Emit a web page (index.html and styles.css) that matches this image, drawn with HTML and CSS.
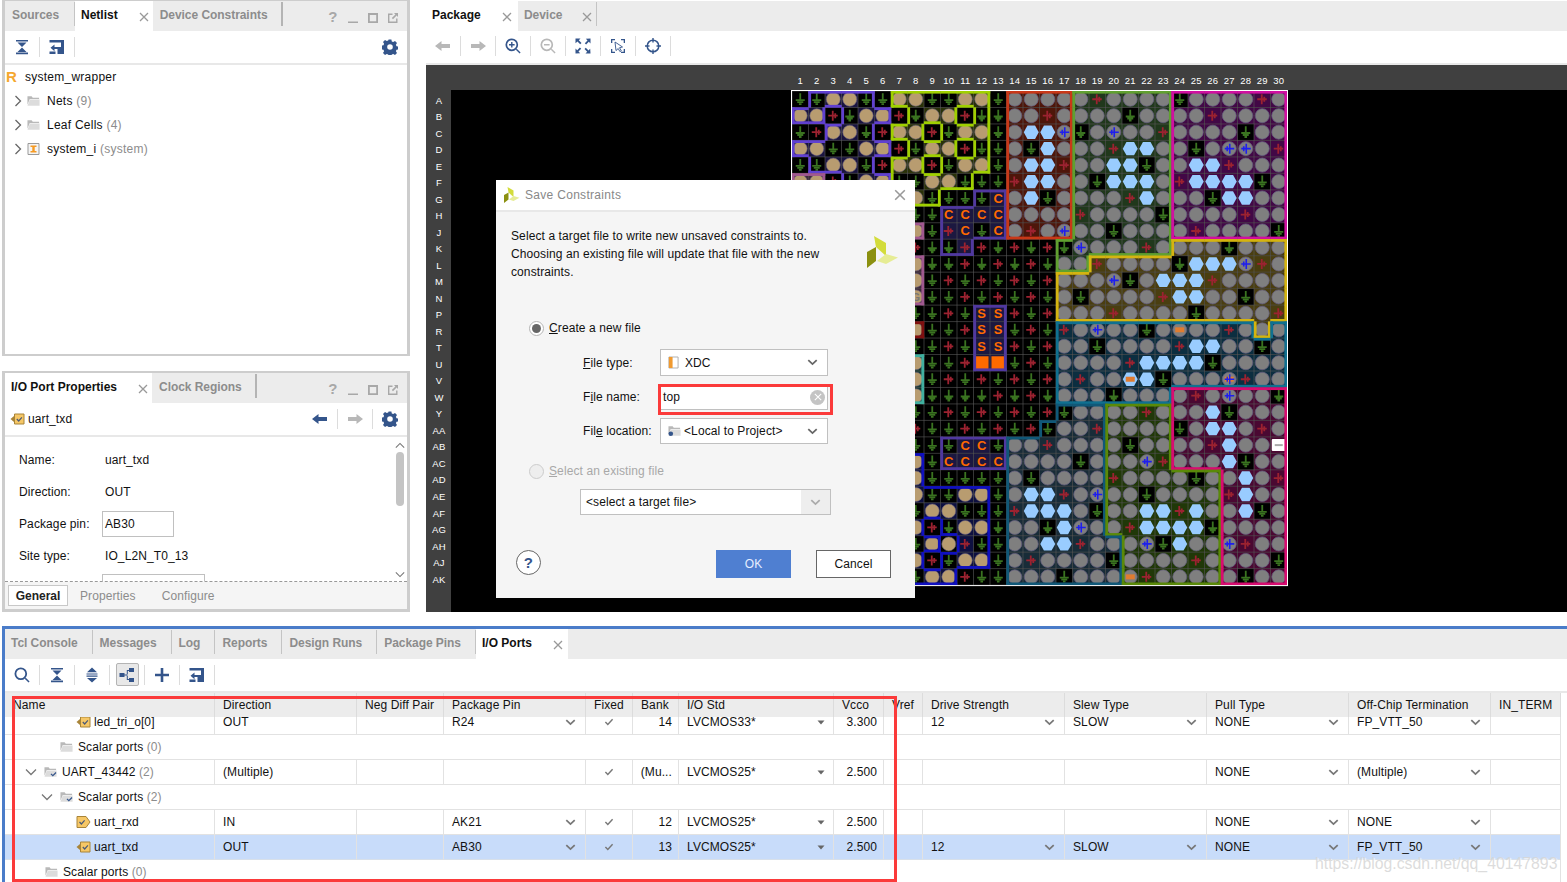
FILE: index.html
```html
<!DOCTYPE html>
<html lang="en">
<head>
<meta charset="utf-8">
<title>Save Constraints</title>
<link rel="stylesheet" href="styles.css">
</head>
<body>
<svg class="defs" aria-hidden="true">
  <symbol id="i-collapse" viewBox="0 0 14 16"><path d="M1 1h12v1.600H1zM2.500 3.600h9L7 8zM7 8.600l4.500 4.400h-9zM1 13.600h12v1.600H1z"/></symbol>
  <symbol id="i-expand" viewBox="0 0 14 16"><path d="M7 0.500l5 4.700H2zM1.500 6.400h11v1.200h-11zM1.500 8.600h11v1.200h-11zM2 11h10l-5 4.600z"/></symbol>
  <symbol id="i-net" viewBox="0 0 16 16"><path d="M0.500 1h14.500v14H8.500v-5H5.500v2.200L1.500 8.800 5.500 5.600v2.400h6.500V3.400H0.500zM0.500 12.600h6v2.400h-6z"/></symbol>
  <symbol id="i-gear" viewBox="0 0 16 16"><path fill-rule="evenodd" d="M6.600 0.500h2.800l.4 2 1.400.6 1.800-1.100 2 2-1.100 1.800.6 1.400 2 .4v2.800l-2 .4-.6 1.400 1.100 1.800-2 2-1.800-1.100-1.400.6-.4 2H6.600l-.4-2-1.400-.6-1.800 1.100-2-2 1.100-1.800-.6-1.400-2-.4V6.600l2-.4.6-1.400L1 3l2-2 1.800 1.100 1.400-.6zM8 5.200a2.800 2.800 0 1 0 0 5.600 2.800 2.800 0 0 0 0-5.600z"/></symbol>
  <symbol id="i-left" viewBox="0 0 16 12"><path d="M0 6l6.500-5v3H15v4H6.500v3z"/></symbol>
  <symbol id="i-right" viewBox="0 0 16 12"><path d="M16 6L9.500 1v3H1v4h8.500v3z"/></symbol>
  <symbol id="i-zin" viewBox="0 0 16 16"><circle cx="6.800" cy="6.800" r="5.500" fill="none" stroke="currentColor" stroke-width="1.700"/><path d="M10.800 11.800l1-1 3.800 3.800-1 1zM4 6.100h2.100V4h1.400v2.100h2.100v1.400H7.500v2.100H6.100V7.500H4z"/></symbol>
  <symbol id="i-zout" viewBox="0 0 16 16"><circle cx="6.800" cy="6.800" r="5.500" fill="none" stroke="currentColor" stroke-width="1.700"/><path d="M10.800 11.800l1-1 3.800 3.800-1 1zM4 6.100h5.600v1.400H4z"/></symbol>
  <symbol id="i-fit" viewBox="0 0 16 16"><path d="M0.500 0.500h5l-1.700 1.700 2.700 2.700-1.300 1.300-2.700-2.700L0.500 5.200zM15.500 0.500v5l-1.700-1.700-2.700 2.700-1.300-1.300 2.700-2.700-1.700-1.700zM0.500 15.500v-5l1.700 1.700 2.700-2.700 1.300 1.300-2.700 2.700 1.700 1.700zM15.500 15.500h-5l1.700-1.700-2.700-2.700 1.300-1.300 2.700 2.700 1.700-1.700z"/></symbol>
  <symbol id="i-sel" viewBox="0 0 16 16"><path d="M1 1h4v1.300H2.300V5H1zM11 1h4v4h-1.300V2.300H11zM1 11h1.300v2.700H5V15H1zM15 11v4h-4v-1.300h2.700V11z"/><path d="M5 4l7.500 5-3 .7 1.800 3.100-1.400.8-1.700-3.100-2.200 2.100z" fill="none" stroke="currentColor" stroke-width=".9"/></symbol>
  <symbol id="i-target" viewBox="0 0 16 16"><circle cx="8" cy="8" r="5.800" fill="none" stroke="currentColor" stroke-width="1.500"/><path d="M7.300 0h1.400v4.500H7.300zM7.300 11.500h1.400V16H7.300zM0 7.300h4.500v1.400H0zM11.500 7.300H16v1.400h-4.500z"/></symbol>
  <symbol id="i-search" viewBox="0 0 16 16"><circle cx="6.800" cy="6.800" r="5.400" fill="none" stroke="currentColor" stroke-width="1.800"/><path d="M10.700 11.800l1.100-1.100 3.800 3.800-1.100 1.100z"/></symbol>
  <symbol id="i-tree" viewBox="0 0 16 16"><path d="M0.500 6h5v4h-5zM10 1h5v4h-5zM10 11h5v4h-5zM5.500 7.400h2.300V3h2.200v1H8.800v3.400H8v1.200h.8V12H10v1H7.800V8.600H5.500z"/></symbol>
  <symbol id="i-plus" viewBox="0 0 16 16"><path d="M6.700 1h2.600v5.700H15v2.600H9.300V15H6.700V9.300H1V6.700h5.700z"/></symbol>
  <symbol id="i-folder" viewBox="0 0 14 12"><path d="M0.500 1h4.500l1.200 1.500H13v1.300H3L.5 10z" fill="#b9b9b9"/><path d="M0.500 11l2.600-6.500H13.500V11z" fill="#dcdcdc"/></symbol>
  <symbol id="i-folder-chk" viewBox="0 0 14 12"><path d="M0.500 1h4.500l1.200 1.500H13v1.300H3L.5 10z" fill="#b9b9b9"/><path d="M0.500 11l2.600-6.500H13.500V11z" fill="#dcdcdc"/><path d="M7.500 8l2 2 3.500-3.500" fill="none" stroke="#34558b" stroke-width="1.300"/></symbol>
  <symbol id="i-folder-loc" viewBox="0 0 14 12"><path d="M0.500 1h4.500l1.200 1.500H13v1.300H3L.5 10z" fill="#b9b9b9"/><path d="M0.500 11l2.600-6.500H13.500V11z" fill="#dcdcdc"/><circle cx="3" cy="9" r="2.500" fill="#34558b"/></symbol>
  <symbol id="i-out" viewBox="0 0 15 14"><path d="M4.500 2h9.500v10H4.500z" fill="#f6c766" stroke="#a88438"/><path d="M0.500 7l3.500-3v6z" fill="#a88438"/><path d="M6.800 7l1.900 2 3.200-3.600" fill="none" stroke="#4a5a78" stroke-width="1.200"/></symbol>
  <symbol id="i-in" viewBox="0 0 15 14"><path d="M1 1.500h9l4 5.500-4 5.500H1z" fill="#f6c766" stroke="#a88438"/><path d="M3.500 7l1.900 2 3.200-3.600" fill="none" stroke="#4a5a78" stroke-width="1.200"/></symbol>
  <symbol id="i-chev" viewBox="0 0 12 8"><path d="M1.200 1.200L6 5.800l4.800-4.600" fill="none" stroke="currentColor" stroke-width="2"/></symbol>
  <symbol id="i-chevr" viewBox="0 0 8 12"><path d="M1.500 1L6.500 6l-5 5" fill="none" stroke="currentColor" stroke-width="1.300"/></symbol>
  <symbol id="i-chevd" viewBox="0 0 12 8"><path d="M1 1.500L6 6.500l5-5" fill="none" stroke="currentColor" stroke-width="1.300"/></symbol>
  <symbol id="i-check" viewBox="0 0 12 10"><path d="M1.500 5l3 3 6-6.500" fill="none" stroke="currentColor" stroke-width="1.800"/></symbol>
  <symbol id="i-tri" viewBox="0 0 8 5"><path d="M0.500 0.500h7L4 4.500z"/></symbol>
  <symbol id="i-x" viewBox="0 0 10 10"><path d="M1 1l8 8M9 1l-8 8" fill="none" stroke="currentColor" stroke-width="1.300"/></symbol>
  <symbol id="i-min" viewBox="0 0 12 12"><path d="M1 9.500h10v1.500H1z"/></symbol>
  <symbol id="i-max" viewBox="0 0 12 12"><path fill-rule="evenodd" d="M1 1h10v10H1zM2.800 3v6.200h6.400V3z"/></symbol>
  <symbol id="i-pop" viewBox="0 0 12 12"><path d="M1 1.500h4.500v1.400H2.400v6.700h6.700V6.500h1.400V11H1zM7 1h4v4L9.600 3.600 6 7.200 4.800 6l3.600-3.600z"/></symbol>
  <symbol id="i-xdc" viewBox="0 0 12 14"><path d="M1 1h10v12H1z" fill="#fff" stroke="#aaa"/><path d="M1 1h4v12H1z" fill="#f09a30"/></symbol>
  <symbol id="i-sys" viewBox="0 0 12 12"><path d="M0.500 0.500h11v11H.5z" fill="#f4f4f4" stroke="#999"/><path d="M3 2.500h6v1.500H7.200v4H9v1.500H3V8h1.800V4H3z" fill="#f59a23"/></symbol>
  <symbol id="i-xil" viewBox="0 0 32 32"><path d="M7 0l12 7v13l-10-9z" fill="#d3dc3a"/><path d="M19 18l12 3.500-12 6.500-9-3z" fill="#e6ec94"/><path d="M0 16l9-5v14l-9 7z" fill="#8b9010"/></symbol>

  <symbol id="p-g" viewBox="-8 -8 16 16" overflow="visible"><path d="M0-6V.5M-4.500.8H4.500M-3 2.800H3M-1.300 4.800H1.300" fill="none" stroke="#3a7320" stroke-width="1.800"/></symbol>
  <symbol id="p-r" viewBox="-8 -8 16 16" overflow="visible"><path d="M-5 0H4.500M-.5-5V5M2-2.500V2.500" fill="none" stroke="#9c2230" stroke-width="1.800"/></symbol>
  <symbol id="p-c" viewBox="-8 -8 16 16" overflow="visible"><circle r="7" fill="#7f7f7f" stroke="#665f7e" stroke-width=".8"/></symbol>
  <symbol id="p-t" viewBox="-8 -8 16 16" overflow="visible"><circle r="7" fill="#b89c70" stroke="#665f7e" stroke-width=".6"/></symbol>
  <symbol id="p-h" viewBox="-8 -8 16 16" overflow="visible"><path d="M-7.500 0l3.700-6.700h7.600L7.500 0 3.800 6.700h-7.600z" fill="#99ccff"/></symbol>
  <symbol id="p-b" viewBox="-8 -8 16 16" overflow="visible"><circle r="7" fill="#7f7f7f" stroke="#665f7e" stroke-width=".8"/><path d="M-4.500 0H5M.5-5V5M-2-2.500V2.500" fill="none" stroke="#1e1eee" stroke-width="1.600"/></symbol>
  <symbol id="p-O" viewBox="-8 -8 16 16" overflow="visible"><path d="M-6.800-6.500H6.800V6.500H-6.800z" fill="#ff6a00"/></symbol>
  <symbol id="p-o" viewBox="-8 -8 16 16" overflow="visible"><circle r="7" fill="#7f7f7f" stroke="#665f7e" stroke-width=".8"/><path d="M-4.500-2.500h9v5h-9z" fill="#e07c30"/></symbol>
  <symbol id="p-P" viewBox="-8 -8 16 16" overflow="visible"><path d="M-7.500 0l3.700-6.700h7.600L7.500 0 3.800 6.700h-7.600z" fill="#99ccff"/><path d="M-4.500-2.500h9v5h-9z" fill="#e07c30"/></symbol>
  <symbol id="p-X" viewBox="-8 -8 16 16" overflow="visible"><circle r="7" fill="#7f7f7f" stroke="#665f7e" stroke-width=".8"/><path d="M-4.500-2.500h9v5h-9z" fill="#e07c30"/><path d="M-4.500 0H5M.5-5V5M-2-2.500V2.500" fill="none" stroke="#1e1eee" stroke-width="1.400"/></symbol>
  <symbol id="p-M" viewBox="-8 -8 16 16" overflow="visible"><rect x="-7" y="-6" width="14" height="12" rx="1" fill="#fff"/><path d="M-4-1h8v2h-8z" fill="#aaa"/></symbol>
</svg>

<div class="stage">
  <div class="top">
    <div class="leftcol">
      <section class="panel p-netlist">
        <div class="tabs">
          <span class="tab">Sources</span>
          <span class="tab active">Netlist<svg class="tx"><use href="#i-x"/></svg></span>
          <span class="tab thick">Device Constraints</span>
          <div class="winbtns"><b>?</b><svg class="wb"><use href="#i-min"/></svg><svg class="wb"><use href="#i-max"/></svg><svg class="wb"><use href="#i-pop"/></svg></div>
        </div>
        <div class="toolbar">
          <span class="tbtn"><svg class="ico"><use href="#i-collapse"/></svg></span>
          <span class="tbtn"><svg class="ico"><use href="#i-net"/></svg></span>
          <span class="tgear"><svg class="ico"><use href="#i-gear"/></svg></span>
        </div>
        <div class="tree">
          <div class="node root"><span class="r-mark">R</span>system_wrapper</div>
          <div class="node"><svg class="twisty"><use href="#i-chevr"/></svg><svg class="fold"><use href="#i-folder"/></svg>Nets <span class="mute">(9)</span></div>
          <div class="node"><svg class="twisty"><use href="#i-chevr"/></svg><svg class="fold"><use href="#i-folder"/></svg>Leaf Cells <span class="mute">(4)</span></div>
          <div class="node"><svg class="twisty"><use href="#i-chevr"/></svg><svg class="fold"><use href="#i-sys"/></svg>system_i <span class="mute">(system)</span></div>
        </div>
      </section>
      <section class="panel p-props">
        <div class="tabs">
          <span class="tab active first">I/O Port Properties<svg class="tx"><use href="#i-x"/></svg></span>
          <span class="tab thick">Clock Regions</span>
          <div class="winbtns"><b>?</b><svg class="wb"><use href="#i-min"/></svg><svg class="wb"><use href="#i-max"/></svg><svg class="wb"><use href="#i-pop"/></svg></div>
        </div>
        <div class="prophead">
          <svg class="port"><use href="#i-out"/></svg><span class="phname">uart_txd</span>
          <span class="nav"><svg class="ico"><use href="#i-left"/></svg></span>
          <span class="nav off"><svg class="ico"><use href="#i-right"/></svg></span>
          <span class="nav last"><svg class="ico"><use href="#i-gear"/></svg></span>
        </div>
        <div class="propbody">
          <div class="propform">
            <div class="prow"><span>Name:</span><span>uart_txd</span></div>
            <div class="prow"><span>Direction:</span><span>OUT</span></div>
            <div class="prow"><span>Package pin:</span><span class="pinput">AB30</span></div>
            <div class="prow"><span>Site type:</span><span>IO_L2N_T0_13</span></div>
            <div class="prow"><span>Fixed IO:</span><span class="pinput wide">LVCMOS25*</span></div>
          </div>
          <div class="vscroll">
            <svg class="sarrow"><use href="#i-chevd"/></svg>
            <span class="thumb"></span>
            <svg class="sarrow dn"><use href="#i-chevd"/></svg>
          </div>
        </div>
        <div class="subtabs"><span class="subtab on">General</span><span class="subtab">Properties</span><span class="subtab">Configure</span></div>
      </section>
    </div>

    <section class="package">
      <div class="tabs pk">
        <span class="tab active pkg">Package<svg class="tx"><use href="#i-x"/></svg></span>
        <span class="tab thin">Device<svg class="tx"><use href="#i-x"/></svg></span>
      </div>
      <div class="toolbar pkbar">
        <span class="tbtn off"><svg class="ico"><use href="#i-left"/></svg></span>
        <span class="tbtn off"><svg class="ico"><use href="#i-right"/></svg></span>
        <span class="tbtn"><svg class="ico"><use href="#i-zin"/></svg></span>
        <span class="tbtn off"><svg class="ico"><use href="#i-zout"/></svg></span>
        <span class="tbtn"><svg class="ico"><use href="#i-fit"/></svg></span>
        <span class="tbtn"><svg class="ico"><use href="#i-sel"/></svg></span>
        <span class="tbtn"><svg class="ico"><use href="#i-target"/></svg></span>
      </div>
      <svg id="pkgmap" class="pkgmap" viewBox="0 0 1141 547"></svg>
    </section>
  </div>

  <section class="bottom">
    <div class="tabs">
      <span class="tab">Tcl Console</span>
      <span class="tab">Messages</span>
      <span class="tab">Log</span>
      <span class="tab">Reports</span>
      <span class="tab">Design Runs</span>
      <span class="tab">Package Pins</span>
      <span class="tab active ports">I/O Ports<svg class="tx"><use href="#i-x"/></svg></span>
    </div>
    <div class="toolbar">
      <span class="tbtn"><svg class="ico"><use href="#i-search"/></svg></span>
      <span class="tbtn"><svg class="ico"><use href="#i-collapse"/></svg></span>
      <span class="tbtn"><svg class="ico"><use href="#i-expand"/></svg></span>
      <span class="tbtn"><span class="pressed"><svg class="ico"><use href="#i-tree"/></svg></span></span>
      <span class="tbtn"><svg class="ico"><use href="#i-plus"/></svg></span>
      <span class="tbtn"><svg class="ico"><use href="#i-net"/></svg></span>
    </div>
    <div class="tablewrap">
      <table class="ports-table">
        <colgroup>
          <col class="w-name"><col class="w-dir"><col class="w-neg"><col class="w-pin"><col class="w-fix"><col class="w-bank"><col class="w-std"><col class="w-vcco"><col class="w-vref"><col class="w-drv"><col class="w-slew"><col class="w-pull"><col class="w-term"><col class="w-in">
        </colgroup>
        <thead>
          <tr><th>Name</th><th>Direction</th><th>Neg Diff Pair</th><th>Package Pin</th><th>Fixed</th><th>Bank</th><th>I/O Std</th><th>Vcco</th><th>Vref</th><th>Drive Strength</th><th>Slew Type</th><th>Pull Type</th><th>Off-Chip Termination</th><th>IN_TERM</th></tr>
        </thead>
        <tbody>
          <tr class="clip">
            <td><div class="tn lvl3"><svg class="pic"><use href="#i-out"/></svg>led_tri_o[0]</div></td><td>OUT</td><td></td>
            <td><div class="dd">R24<svg class="ch"><use href="#i-chev"/></svg></div></td>
            <td class="ctr"><svg class="ck"><use href="#i-check"/></svg></td><td class="num">14</td>
            <td><div class="dd std">LVCMOS33*<svg class="tri"><use href="#i-tri"/></svg></div></td><td class="num">3.300</td><td></td>
            <td><div class="dd">12<svg class="ch"><use href="#i-chev"/></svg></div></td>
            <td><div class="dd">SLOW<svg class="ch"><use href="#i-chev"/></svg></div></td>
            <td><div class="dd">NONE<svg class="ch"><use href="#i-chev"/></svg></div></td>
            <td><div class="dd">FP_VTT_50<svg class="ch"><use href="#i-chev"/></svg></div></td><td></td>
          </tr>
          <tr class="grp"><td colspan="14"><div class="tn lvl2b"><svg class="fic"><use href="#i-folder"/></svg>Scalar ports <span class="mute">(0)</span></div></td></tr>
          <tr>
            <td><div class="tn lvl1"><svg class="tw"><use href="#i-chevd"/></svg><svg class="fic"><use href="#i-folder-chk"/></svg>UART_43442 <span class="mute">(2)</span></div></td><td>(Multiple)</td><td></td><td></td>
            <td class="ctr"><svg class="ck"><use href="#i-check"/></svg></td><td class="num">(Mu...</td>
            <td><div class="dd std">LVCMOS25*<svg class="tri"><use href="#i-tri"/></svg></div></td><td class="num">2.500</td><td></td><td></td><td></td>
            <td><div class="dd">NONE<svg class="ch"><use href="#i-chev"/></svg></div></td>
            <td><div class="dd">(Multiple)<svg class="ch"><use href="#i-chev"/></svg></div></td><td></td>
          </tr>
          <tr class="grp"><td colspan="14"><div class="tn lvl2"><svg class="tw"><use href="#i-chevd"/></svg><svg class="fic"><use href="#i-folder-chk"/></svg>Scalar ports <span class="mute">(2)</span></div></td></tr>
          <tr>
            <td><div class="tn lvl3"><svg class="pic"><use href="#i-in"/></svg>uart_rxd</div></td><td>IN</td><td></td>
            <td><div class="dd">AK21<svg class="ch"><use href="#i-chev"/></svg></div></td>
            <td class="ctr"><svg class="ck"><use href="#i-check"/></svg></td><td class="num">12</td>
            <td><div class="dd std">LVCMOS25*<svg class="tri"><use href="#i-tri"/></svg></div></td><td class="num">2.500</td><td></td><td></td><td></td>
            <td><div class="dd">NONE<svg class="ch"><use href="#i-chev"/></svg></div></td>
            <td><div class="dd">NONE<svg class="ch"><use href="#i-chev"/></svg></div></td><td></td>
          </tr>
          <tr class="sel">
            <td><div class="tn lvl3"><svg class="pic"><use href="#i-out"/></svg>uart_txd</div></td><td>OUT</td><td></td>
            <td><div class="dd">AB30<svg class="ch"><use href="#i-chev"/></svg></div></td>
            <td class="ctr"><svg class="ck"><use href="#i-check"/></svg></td><td class="num">13</td>
            <td><div class="dd std">LVCMOS25*<svg class="tri"><use href="#i-tri"/></svg></div></td><td class="num">2.500</td><td></td>
            <td><div class="dd">12<svg class="ch"><use href="#i-chev"/></svg></div></td>
            <td><div class="dd">SLOW<svg class="ch"><use href="#i-chev"/></svg></div></td>
            <td><div class="dd">NONE<svg class="ch"><use href="#i-chev"/></svg></div></td>
            <td><div class="dd">FP_VTT_50<svg class="ch"><use href="#i-chev"/></svg></div></td><td></td>
          </tr>
          <tr class="grp last"><td colspan="14"><div class="tn lvl1b"><svg class="fic"><use href="#i-folder"/></svg>Scalar ports <span class="mute">(0)</span></div></td></tr>
        </tbody>
      </table>
    </div>
  </section>

  <div class="dialog">
    <div class="dtitle">
      <svg class="dlogo"><use href="#i-xil"/></svg><span class="dtext">Save Constraints</span>
      <svg class="dclose"><use href="#i-x"/></svg>
    </div>
    <div class="dbody">
      <div class="dintro">
        <p>Select a target file to write new unsaved constraints to.<br>Choosing an existing file will update that file with the new<br>constraints.</p>
        <svg class="biglogo"><use href="#i-xil"/></svg>
      </div>
      <div class="radio-row"><span class="radio on"></span><span><u>C</u>reate a new file</span></div>
      <div class="dform">
        <span><u>F</u>ile type:</span>
        <div class="combo tall"><svg class="cic"><use href="#i-xdc"/></svg><span class="sp">XDC</span><svg class="ch"><use href="#i-chev"/></svg></div>
        <span>F<u>i</u>le name:</span>
        <div class="combo file"><span class="sp">top</span><span class="clear"><svg><use href="#i-x"/></svg></span></div>
        <span>Fil<u>e</u> location:</span>
        <div class="combo"><svg class="cfold"><use href="#i-folder-loc"/></svg><span class="sp">&lt;Local to Project&gt;</span><svg class="ch"><use href="#i-chev"/></svg></div>
      </div>
      <div class="radio-row off"><span class="radio dim"></span><span><u>S</u>elect an existing file</span></div>
      <div class="target"><span class="sp">&lt;select a target file&gt;</span><span class="tarrow"><svg class="ch"><use href="#i-chev"/></svg></span></div>
      <div class="dfoot">
        <span class="help">?</span>
        <span class="btn primary">OK</span>
        <span class="btn">Cancel</span>
      </div>
    </div>
  </div>

  <div class="redbox file"></div>
  <div class="redbox table"></div>
  <div class="watermark">https://blog.csdn.net/qq_40147893</div>
</div>
<script src="package.js"></script>
</body>
</html>
```
FILE: styles.css
```css
* { box-sizing: border-box; }
html, body { margin: 0; padding: 0; }
body { width: 1567px; height: 882px; overflow: hidden; background: #fff; color: #111; font: 12px/16px "Liberation Sans", Arial, sans-serif; letter-spacing: .1px; }
.defs { position: absolute; width: 0; height: 0; }
svg { display: block; flex: none; }
.stage { position: relative; width: 1567px; height: 882px; }
.top { display: flex; height: 612px; padding-left: 2px; }
.leftcol { width: 408px; margin-right: 16px; display: flex; flex-direction: column; gap: 15px; }

.panel { border: 3px solid #cdcdcd; border-top-width: 1px; display: flex; flex-direction: column; overflow: hidden; }
.p-netlist { height: 356px; border-bottom-width: 2px; }
.p-props { height: 241px; border-top-width: 2px; }

.tabs { display: flex; height: 30px; background: #ececec; align-items: stretch; flex: none; }
.tab { display: flex; align-items: center; padding: 0 15px 2px 7px; font-weight: bold; color: #8c8c8c; position: relative; white-space: nowrap; letter-spacing: -.05px; }
.tab::after { content: ""; position: absolute; right: 0; top: 1px; bottom: 5px; width: 1px; background: #c4c4c4; }
.tab.thick::after { width: 2px; background: #b4b4b4; }
.tab.active { background: #fff; color: #111; padding: 0 4px 2px 6px; letter-spacing: 0; }
.tab.active::after { display: none; }
.tab.first { padding-left: 6px; }
.p-netlist .tab:first-child { padding-right: 16px; }
.tx { width: 10px; height: 10px; margin-left: 21px; margin-top: 4px; color: #999; }
.tab.thin .tx { margin-left: 20px; }
.winbtns { margin-left: auto; display: flex; align-items: center; color: #a8a8a8; padding-right: 8px; }
.winbtns b { width: 20px; text-align: center; font-size: 15px; margin: 1px -4px 0 0; }
.wb { width: 12px; height: 12px; margin-left: 8px; margin-top: 3px; fill: #a8a8a8; }

.toolbar { display: flex; height: 32px; align-items: center; background: #fff; flex: none; padding-bottom: 1px; }
.tbtn { width: 35px; height: 20px; display: flex; align-items: center; justify-content: center; border-right: 1px solid #dcdcdc; position: relative; color: #34558b; fill: #34558b; }
.tbtn.off { color: #b8b8b8; fill: #b8b8b8; }
.ico { width: 16px; height: 16px; }
.tgear { margin-left: auto; margin-right: 9px; color: #34558b; fill: #34558b; }
.pressed { width: 23px; height: 23px; background: #e8e8e8; border: 1px solid #b4b4b4; border-radius: 2px; display: flex; align-items: center; justify-content: center; }

.tree { border-top: 2px solid #e8e8e8; flex: 1; letter-spacing: .25px; }
.node { height: 24px; display: flex; align-items: center; white-space: pre; padding-left: 9px; }
.node.root { padding-left: 0; }
.r-mark { color: #f5a830; font-weight: bold; font-size: 15px; width: 20px; padding-left: 1px; }
.twisty { width: 8px; height: 12px; color: #666; margin-right: 5px; }
.fold { width: 13px; height: 12px; margin-right: 7px; }
.mute { color: #8c8c8c; }

.prophead { height: 32px; display: flex; align-items: center; flex: none; background: #fff; padding-left: 5px; }
.port { width: 15px; height: 14px; margin-right: 3px; }
.phname { margin-right: auto; }
.nav { width: 35px; height: 20px; display: flex; align-items: center; justify-content: center; border-right: 1px solid #dcdcdc; color: #34558b; fill: #34558b; }
.nav.off { color: #b8b8b8; fill: #b8b8b8; }
.nav.last { border-right: 0; width: 34px; }
.propbody { flex: 1; min-height: 0; display: flex; border-top: 2px solid #e8e8e8; border-bottom: 1px dashed #999; background: #fff; overflow: hidden; }
.propform { flex: 1; padding: 7px 0 0 14px; overflow: hidden; }
.prow { height: 32px; display: flex; align-items: center; }
.prow > span:first-child { width: 86px; flex: none; }
.pinput { border: 1px solid #c0c0c0; height: 26px; width: 72px; margin-left: -3px; padding-left: 2px; display: flex; align-items: center; }
.pinput.wide { width: 103px; padding-left: 24px; height: 28px; }
.vscroll { width: 15px; display: flex; flex-direction: column; align-items: center; }
.sarrow { width: 10px; height: 7px; color: #777; transform: scaleY(-1); margin-top: 5px; }
.sarrow.dn { transform: none; margin-top: auto; margin-bottom: 3px; }
.thumb { width: 8px; height: 54px; background: #c4c4c4; border-radius: 4px; margin-top: 3px; }
.subtabs { height: 27px; display: flex; align-items: center; background: #f5f5f5; flex: none; padding-left: 3px; color: #8c8c8c; }
.subtab { padding: 0 6px; margin-right: 6px; height: 21px; display: flex; align-items: center; }
.subtab + .subtab + .subtab { margin-left: 8px; }
.subtab.on { background: #fff; border: 1px solid #c8c8c8; font-weight: bold; color: #222; width: 60px; justify-content: center; padding: 0; letter-spacing: 0; }

.package { flex: 1; display: flex; flex-direction: column; min-width: 0; }
.tabs.pk { margin-top: 1px; }
.tab.pkg { width: 92px; }
.tab.thin { padding: 0 5px 2px 6px; }
.pkbar { border-bottom: 2px solid #e8e8e8; height: 34px; padding-bottom: 2px; }
.pkgmap { width: 1141px; height: 547px; background: #404040; }

.bottom { position: absolute; left: 2px; top: 626px; right: 0; bottom: 0; border-top: 3px solid #4a7cc9; border-left: 3px solid #4a7cc9; overflow: hidden; }
.bottom .tabs { height: 30px; }
.bottom .tab:first-child { padding-left: 6px; }
.bottom .tab.ports { padding-right: 5px; }
.tablewrap { border-top: 2px solid #e8e8e8; }
.ports-table { width: 1556px; table-layout: fixed; border-collapse: separate; border-spacing: 0; font-size: 12px; }
.w-name { width: 210px; } .w-dir { width: 142px; } .w-neg { width: 87px; } .w-pin { width: 142px; }
.w-fix { width: 47px; } .w-bank { width: 46px; } .w-std { width: 155px; } .w-vcco { width: 50px; }
.w-vref { width: 39px; } .w-drv { width: 142px; } .w-slew { width: 142px; } .w-pull { width: 142px; }
.w-term { width: 142px; } .w-in { width: 70px; }
th { height: 24px; background: #ececec; font-weight: normal; text-align: left; padding: 0 0 0 8px; border-right: 1px solid #dcdcdc; white-space: nowrap; overflow: hidden; }
td { height: 25px; padding: 0 0 0 8px; border-right: 1px solid #e2e2e2; border-bottom: 1px solid #e2e2e2; white-space: nowrap; overflow: hidden; }
tr.clip td { height: 18px; vertical-align: top; line-height: 10px; }
tr.sel td { background: #c8dcfa; border-bottom-color: #d8e0ea; }
tr.grp td { padding-left: 0; }
tr.grp.last td { border-bottom-color: transparent; }
.num { text-align: right; padding: 0 6px 0 0; }
.ctr { padding: 0; }
.ck { width: 10px; height: 8px; color: #777; margin: 0 auto; }
tr.clip .ck { margin-top: 1px; }
.dd { display: flex; align-items: center; justify-content: space-between; padding-right: 9px; }
.dd.std { padding-right: 8px; }
.ch { width: 11px; height: 7px; color: #777; }
.tri { width: 8px; height: 5px; fill: #666; }
.tn { display: flex; align-items: center; white-space: pre; margin-left: -8px; }
tr.grp .tn { margin-left: 0; }
.lvl1 { padding-left: 18px; } .lvl1b { padding-left: 40px; }
.lvl2 { padding-left: 34px; } .lvl2b { padding-left: 55px; }
.lvl3 { padding-left: 71px; }
.tw { width: 12px; height: 8px; color: #777; margin-left: 2px; margin-right: 7px; }
.fic { width: 13px; height: 12px; margin-right: 5px; }
.pic { width: 15px; height: 14px; margin-right: 3px; }
tr.clip .pic { margin-top: -2px; margin-bottom: -2px; }

.dialog { position: absolute; left: 496px; top: 180px; width: 419px; height: 418px; background: #f5f5f5; display: flex; flex-direction: column; }
.dtitle { height: 32px; background: #fff; border-bottom: 2px solid #e8e8e8; display: flex; align-items: center; padding: 0 9px 0 8px; flex: none; }
.dlogo { width: 16px; height: 16px; margin-right: 5px; }
.dtext { color: #888; letter-spacing: .3px; }
.dclose { width: 12px; height: 12px; margin-left: auto; color: #999; }
.dbody { flex: 1; padding: 15px 0 0 15px; display: flex; flex-direction: column; }
.dintro { display: flex; line-height: 18px; }
.dintro p { margin: 0; width: 356px; }
.biglogo { width: 32px; height: 32px; margin-top: 9px; }
.radio-row { height: 20px; display: flex; align-items: center; margin: 37px 0 0 18px; }
.radio { width: 15px; height: 15px; border: 1px solid #b4b4b4; border-radius: 50%; background: #fff; margin-right: 5px; display: flex; align-items: center; justify-content: center; }
.radio.on::after { content: ""; width: 9px; height: 9px; border-radius: 50%; background: #666; }
.radio-row.off { color: #a8a8a8; margin-top: 17px; }
.radio.dim { background: #eee; border-color: #ccc; }
.dform { display: grid; grid-template-columns: 77px 168px; row-gap: 8px; align-items: center; margin: 11px 0 0 72px; }
.combo { height: 26px; border: 1px solid #c0c0c0; background: #fff; display: flex; align-items: center; padding: 0 9px 0 7px; }
.combo.tall { height: 27px; }
.combo .sp { margin-right: auto; }
.cic { width: 11px; height: 13px; margin-right: 6px; }
.cfold { width: 13px; height: 12px; margin-right: 3px; }
.combo .ch { color: #666; }
.clear { width: 15px; height: 15px; border-radius: 50%; background: #c4c4c4; color: #fff; display: flex; align-items: center; justify-content: center; }
.clear svg { width: 8px; height: 8px; }
.combo.file { padding: 0 2px; }
.target { width: 251px; height: 26px; margin: 8px 0 0 69px; border: 1px solid #c0c0c0; background: #fff; display: flex; align-items: center; padding-left: 5px; }
.target .sp { margin-right: auto; }
.tarrow { width: 29px; height: 24px; background: #eee; display: flex; align-items: center; justify-content: center; }
.tarrow .ch { color: #aaa; }
.dfoot { margin-top: auto; height: 48px; display: flex; align-items: flex-start; padding: 0 24px 0 5px; }
.help { width: 25px; height: 25px; border: 1px solid #666; border-radius: 50%; background: #fff; color: #34558b; font-weight: bold; font-size: 15px; text-align: center; line-height: 23px; margin: 0 auto 0 0; }
.btn { width: 75px; height: 28px; border: 1px solid #666; background: #fff; text-align: center; line-height: 26px; margin-left: 25px; }
.btn.primary { background: #4f7fd1; border-color: #4f7fd1; color: #e6eeff; }

.redbox { position: absolute; border: 3px solid #fb3a3a; pointer-events: none; }
.redbox.file { left: 658px; top: 384px; width: 175px; height: 31px; }
.redbox.table { left: 12px; top: 696px; width: 885px; height: 186px; }
.watermark { position: absolute; left: 1315px; top: 855px; font-size: 15.800px; line-height: 18px; letter-spacing: 0; color: rgba(214, 214, 214, .85); text-shadow: 1px 1px 1px rgba(255, 255, 255, .9); white-space: nowrap; }

.lbl { fill: #fff; font: 9.500px "Liberation Sans", Arial, sans-serif; text-anchor: middle; }
.pin-l { font: bold 13px "Liberation Sans", Arial, sans-serif; text-anchor: middle; fill: #ff6a00; }
.pin-g { font: bold 11px "Liberation Sans", Arial, sans-serif; text-anchor: middle; fill: #777; }
.gridline { stroke: #5a5a5a; stroke-width: 1; opacity: .6; }
.frame { fill: none; stroke: #fff; stroke-width: 1; }
.void { fill: #000; }
.t-a { fill: #1a1440; } .t-l { fill: #2a3208; } .t-m { fill: #40283a; } .t-o { fill: #4e160a; }
.t-n { fill: #20381c; } .t-k { fill: #420846; } .t-y { fill: #4a3e10; } .t-b { fill: #0c2e40; }
.t-c { fill: #4a0832; } .t-d { fill: #203808; } .t-e { fill: #182c38; } .t-v { fill: #1c1840; }
.t-u { fill: #0e1040; } .t-t { fill: #143830; } .t-x { fill: #501010; }
.e-a { stroke: #6040d0; } .e-l { stroke: #a0d000; } .e-m { stroke: #a05890; } .e-o { stroke: #c83818; }
.e-n { stroke: #60a030; } .e-k { stroke: #d010a0; } .e-y { stroke: #d4b410; } .e-b { stroke: #107090; }
.e-c { stroke: #d80c70; } .e-d { stroke: #5a8a08; } .e-e { stroke: #105878; } .e-v { stroke: #5038a0; }
.e-u { stroke: #1010c0; } .e-t { stroke: #40b0a0; } .e-x { stroke: #801010; }
.edge { stroke-width: 2.800; stroke-linecap: square; fill: none; }
```
FILE: package.js
```js
(function () {
  var PINS = [
    "ggttggttggttg"+"cccc"+"crcccc"+"gccccrc",
    "ttrgttrgttrgg"+"ccrc"+"cccgcc"+"ccrcccc",
    "grttgrttrgttg"+"chhb"+"gcbccr"+"ccccgcc",
    "ttggttrgttrgg"+"cghc"+"ccrhhc"+"cgcbbcr",
    "ggttgrttrgttg"+"chhr"+"cchhgc"+"chhrccc",
    "ttrgttggttggg"+"rhhc"+"cghhhc"+"rhhhhgc",
    "gggggggtggggC"+"chgc"+"cccrhc"+"ccghhcc",
    "ggggggg"+"ggCCCC"+"cccc"+"rccccg"+"ccccrcc",
    "ggggggg"+"tgrCgC"+"crcb"+"ccgccc"+"crccccg",
    "ggggggg"+"rggrrg"+"rgrg"+"bcccrc"+"cccgccc",
    "ggggggg"+"tggrgr"+"grgc"+"crcccc"+"ghhhbrc",
    "ggggggg"+"tgrgrg"+"rgrc"+"ccbgch"+"hhrcccc",
    "ggggggg"+"Gggrgr"+"grgc"+"gccccr"+"hhccgcc",
    "ggggggg"+"ggrgSS"+"rgrc"+"ccrccc"+"cgccccr",
    "ggggggg"+"tggrSS"+"grgr"+"cbccgc"+"occrccc",
    "ggggggg"+"ggrgSS"+"rgrc"+"cgcccc"+"rhhccgc",
    "ggggggg"+"tggrOO"+"grgc"+"cccrhh"+"hhgcccc",
    "ggggggg"+"tgrgrg"+"rgrc"+"rccPhg"+"cccXrcc",
    "ggggggg"+"tggggr"+"grgc"+"ccgccc"+"crcbccg",
    "ggggggg"+"ggrgrg"+"rgrg"+"ccccrc"+"cchgccc",
    "ggggggg"+"rggrgr"+"grgc"+"crcccc"+"gchhcrc",
    "ggggggg"+"gggCCg"+"ccrc"+"cccgcc"+"ccrhccM",
    "ggggggg"+"tgCCCC"+"cccc"+"gcccbr"+"ccchgcc",
    "ggggggg"+"tggggg"+"cgcc"+"ccrccc"+"cgcchcr",
    "ggggggg"+"tggttg"+"chhr"+"cbccgc"+"cccrhcc",
    "ggggggg"+"gttggg"+"rhhh"+"cgcchh"+"rhcchgc",
    "ggggggg"+"trgttg"+"ccgh"+"bccrhh"+"hhgcccc",
    "ggggggg"+"gttrgg"+"cchh"+"rcccbg"+"hccbrcc",
    "ggggggg"+"trgttg"+"crcc"+"ccgccc"+"crccccg",
    "ggggggg"+"gttrgg"+"cccg"+"cccorc"+"ccccgcc"
  ];
  var BANKS = [
    ".aaaa.llllll."+"oooo"+"nnnnnn"+"kkkkkkk",
    "aa.aaa.lll.l."+"oooo"+"nnnnnn"+"kkkkkkk",
    "..aaa.ll.lll."+"oooo"+"nnnnnn"+"kkkkkkk",
    "aaaaaa.lll.l."+"oooo"+"nnnnnn"+"kkkkkkk",
    ".aaaa.ll.lll."+"oooo"+"nnnnnn"+"kkkkkkk",
    "mm.aaalllll.."+"oooo"+"nnnnnn"+"kkkkkkk",
    ".......ll..vv"+"oooo"+"nnnnnn"+"kkkkkkk",
    ".........vvvv"+"oooo"+"nnnnnn"+"kkkkkkk",
    ".......m.vvvv"+"oooo"+"nnnnnn"+"kkkkkkk",
    ".........vv.."+"...n"+"nnnnnn"+"yyyyyyy",
    ".......m....."+"...n"+"nyyyyy"+"yyyyyyy",
    ".......m....."+"...y"+"yyyyyy"+"yyyyyyy",
    ".......m....."+"...y"+"yyyyyy"+"yyyyyyy",
    "...........vv"+"...y"+"yyyyyy"+"yyyyyyy",
    ".......x...vv"+"...b"+"bbbbbb"+"bbbbbyb",
    "...........vv"+"...b"+"bbbbbb"+"bbbbbbb",
    ".......t...vv"+"...b"+"bbbbbb"+"bbbbbbb",
    ".......t....."+"...b"+"bbbbbb"+"bbbbbbb",
    ".......t....."+"...b"+"bbbbbb"+"ccccccc",
    "............."+"...e"+"eedddd"+"ccccccc",
    "............."+"..ee"+"eedddd"+"ccccccc",
    ".........vvvv"+"eeee"+"eedddd"+"ccccccc",
    ".......u.vvvv"+"eeee"+"eedddd"+"ccccccc",
    ".......u....."+"eeee"+"eedddd"+"dddcccc",
    ".......uuuuu."+"eeee"+"eedddd"+"dddcccc",
    ".......uuuuu."+"eeee"+"eedddd"+"dddcccc",
    ".......u.uuu."+"eeee"+"eedddd"+"dddcccc",
    ".......uu.uu."+"eeee"+"eeeddd"+"dddcccc",
    ".......u.uuu."+"eeee"+"eeeddd"+"dddcccc",
    ".......uuu..."+"eeee"+"eeeddd"+"dddcccc"
  ];
  var ROWS = ["A","B","C","D","E","F","G","H","J","K","L","M","N","P","R","T","U","V","W","Y","AA","AB","AC","AD","AE","AF","AG","AH","AJ","AK"];
  var X0 = 366, Y0 = 26, CW = 16.5, CH = 16.47, N = 30;
  var out = [];

  out.push('<rect class="void" x="25" y="25" width="1116" height="522"/>');

  for (var r = 0; r < N; r++) {
    for (var c = 0; c < N; c++) {
      var b = BANKS[r][c], p = PINS[r][c];
      if (b !== "." && p !== "g") {
        out.push('<rect class="t-' + b + '" x="' + (X0 + c * CW) + '" y="' + (Y0 + r * CH) + '" width="' + CW + '" height="' + CH + '"/>');
      }
    }
  }
  for (var i = 0; i <= N; i++) {
    out.push('<line class="gridline" x1="' + (X0 + i * CW) + '" y1="' + Y0 + '" x2="' + (X0 + i * CW) + '" y2="' + (Y0 + N * CH) + '"/>');
    out.push('<line class="gridline" x1="' + X0 + '" y1="' + (Y0 + i * CH) + '" x2="' + (X0 + N * CW) + '" y2="' + (Y0 + i * CH) + '"/>');
  }
  for (r = 0; r < N; r++) {
    for (c = 0; c < N; c++) {
      var ch = PINS[r][c];
      var cx = X0 + (c + 0.5) * CW, cy = Y0 + (r + 0.5) * CH;
      if (ch === "S" || ch === "C") {
        out.push('<text class="pin-l" x="' + cx + '" y="' + (cy + 4.5) + '">' + ch + '</text>');
      } else if (ch === "G") {
        out.push('<use href="#p-t" x="' + (cx - 8) + '" y="' + (cy - 8) + '" width="16" height="16"/>');
        out.push('<text class="pin-g" x="' + cx + '" y="' + (cy + 4) + '">G</text>');
      } else {
        out.push('<use href="#p-' + ch + '" x="' + (cx - 8) + '" y="' + (cy - 8) + '" width="16" height="16"/>');
      }
    }
  }
  function bank(rr, cc) {
    if (rr < 0 || cc < 0 || rr >= N || cc >= N) return ".";
    return BANKS[rr][cc];
  }
  var IN = 1.2;
  for (r = 0; r < N; r++) {
    for (c = 0; c < N; c++) {
      var k = BANKS[r][c];
      if (k === ".") continue;
      var x1 = X0 + c * CW, y1 = Y0 + r * CH, x2 = x1 + CW, y2 = y1 + CH;
      var sides = [
        [r - 1, c, x1 + IN, y1 + IN, x2 - IN, y1 + IN],
        [r + 1, c, x1 + IN, y2 - IN, x2 - IN, y2 - IN],
        [r, c - 1, x1 + IN, y1 + IN, x1 + IN, y2 - IN],
        [r, c + 1, x2 - IN, y1 + IN, x2 - IN, y2 - IN]
      ];
      sides.forEach(function (s) {
        if (bank(s[0], s[1]) !== k) {
          out.push('<line class="edge e-' + k + '" x1="' + s[2] + '" y1="' + s[3] + '" x2="' + s[4] + '" y2="' + s[5] + '"/>');
        }
      });
    }
  }
  out.push('<rect class="frame" x="' + (X0 - 0.5) + '" y="' + (Y0 - 0.5) + '" width="' + (N * CW + 1) + '" height="' + (N * CH + 1) + '"/>');
  for (i = 0; i < N; i++) {
    out.push('<text class="lbl" x="' + (X0 + (i + 0.5) * CW) + '" y="18.500">' + (i + 1) + '</text>');
    out.push('<text class="lbl" x="13" y="' + (38.5 + i * 16.52) + '">' + ROWS[i] + '</text>');
  }
  document.getElementById("pkgmap").innerHTML = out.join("");
})();
```
